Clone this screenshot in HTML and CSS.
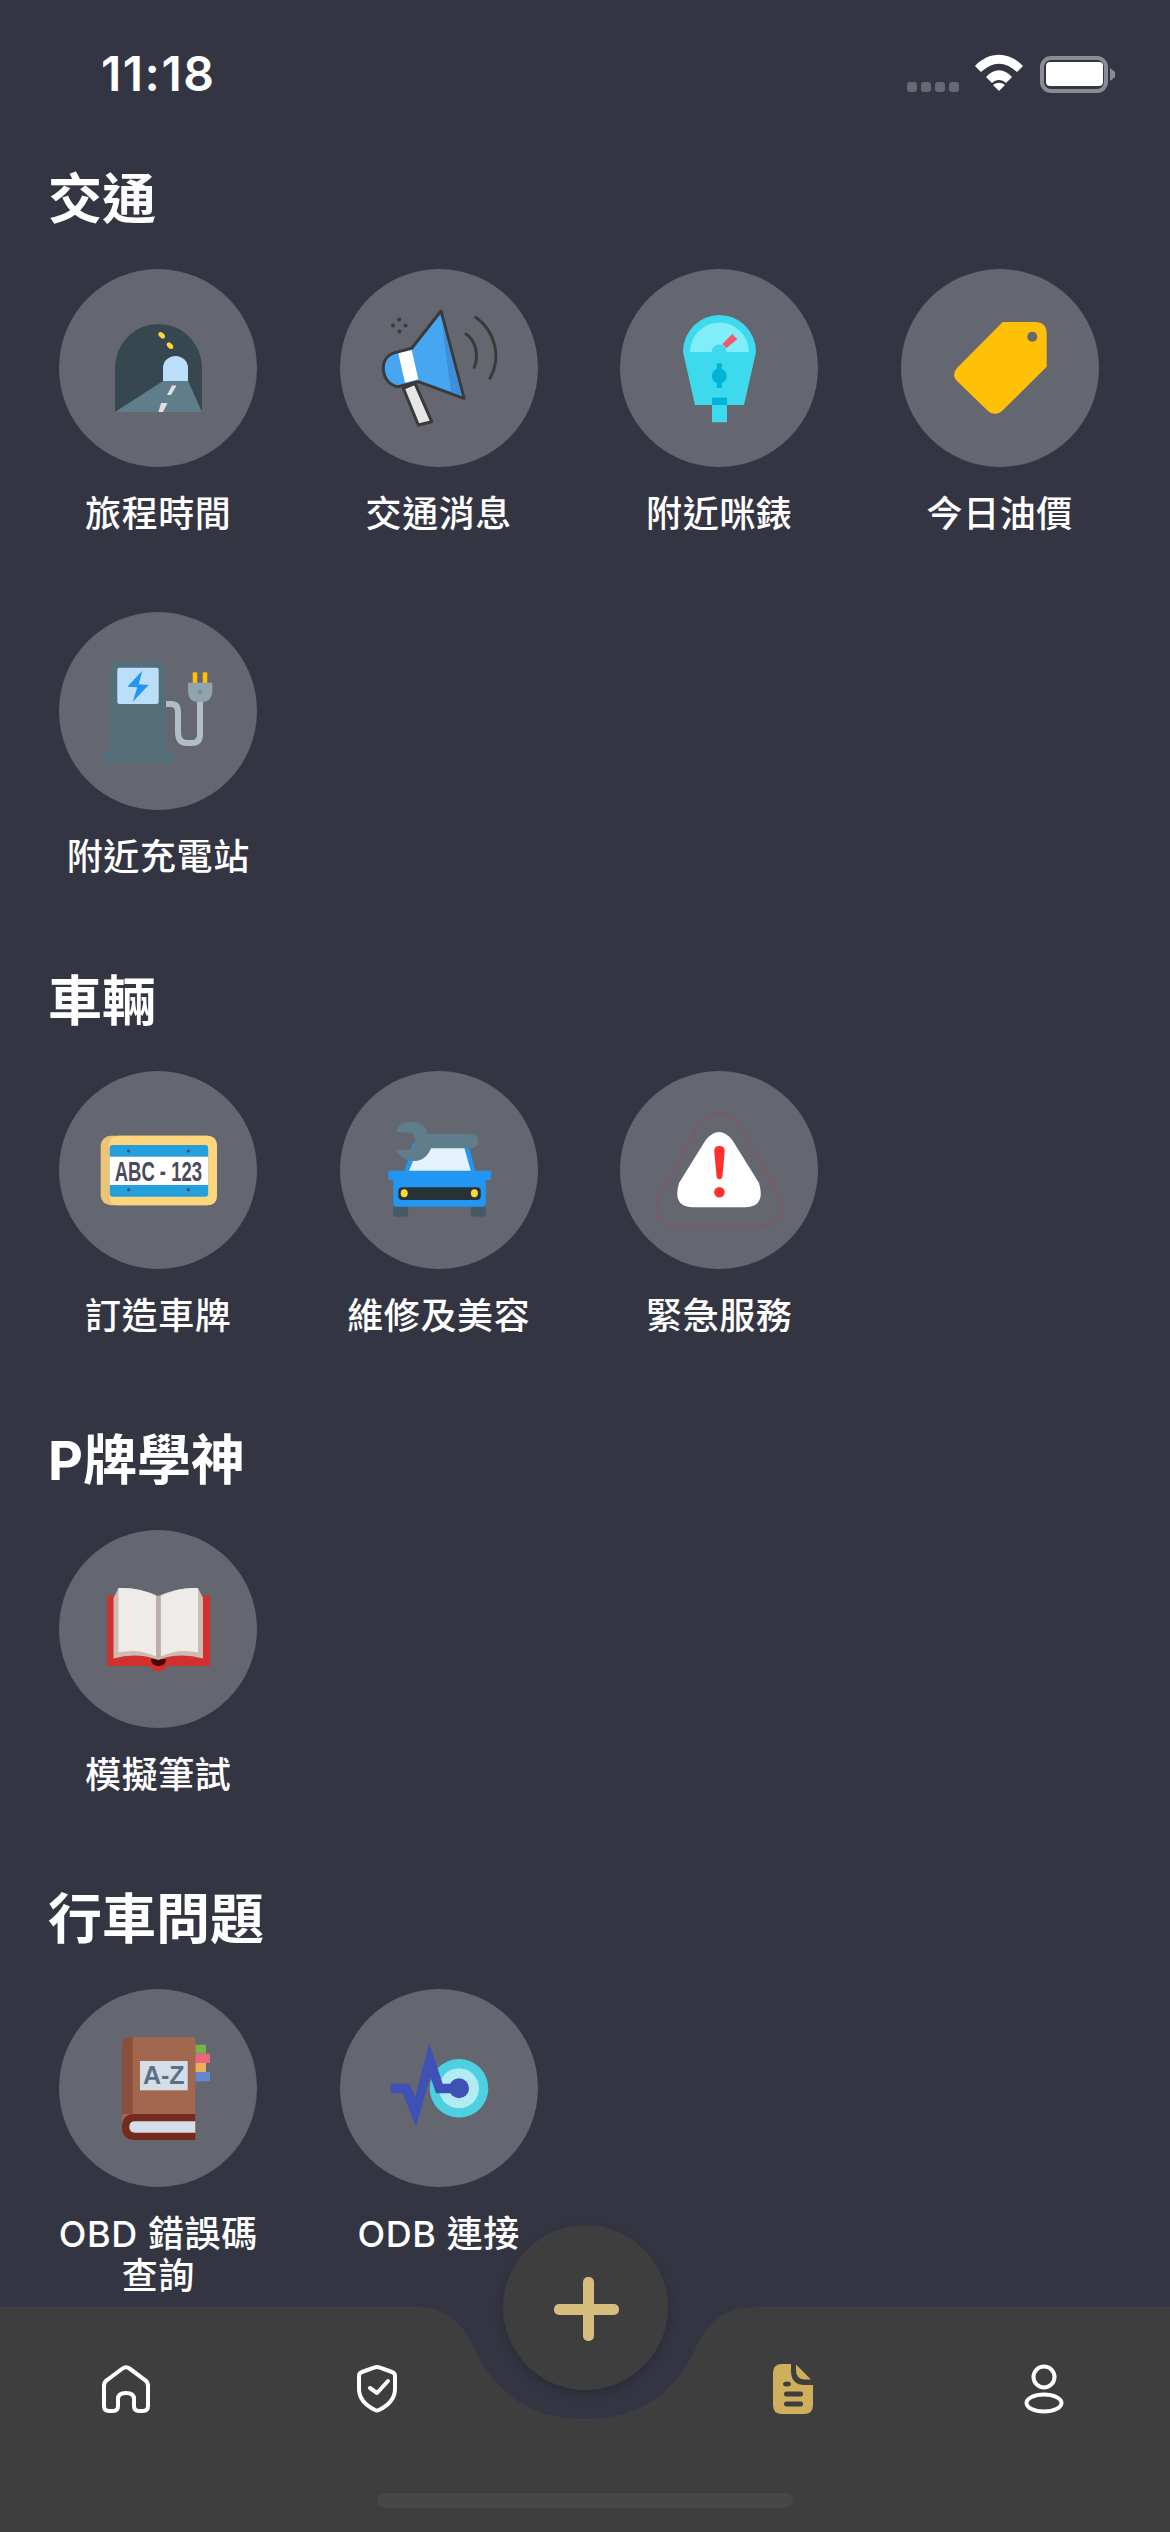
FILE: index.html
```html
<!DOCTYPE html>
<html lang="zh-Hant">
<head>
    <meta charset="utf-8" />
    <title>服務</title>
    <link rel="stylesheet" href="styles.css">
</head>
<body>
<div class="screen">

    <!-- status bar -->
    <div class="status">
        <div class="time">11:18</div>
        <svg class="status-icons" width="208" height="40" viewBox="0 0 208 40">
            <g fill="#666874">
                <rect x="0" y="28" width="10" height="10" rx="3"/>
                <rect x="14" y="28" width="10" height="10" rx="3"/>
                <rect x="28" y="28" width="10" height="10" rx="3"/>
                <rect x="42" y="28" width="10" height="10" rx="3"/>
            </g>
            <g fill="#fff">
                <path d="M68 12C82-3 102-3 116 12L110 18C98 7 86 7 74 18Z"/>
                <path d="M79 23C87 14 97 14 105 23L99 29C95 25 89 25 85 29Z"/>
                <path d="M92 37L86 31C90 28 94 28 98 31Z"/>
            </g>
            <rect x="135" y="4" width="64" height="33" rx="9" fill="none" stroke="#8a8b94" stroke-width="4"/>
            <rect x="139" y="8" width="57" height="24" rx="4" fill="#fff"/>
            <path d="M203 14L208 18V23L203 27Z" fill="#8a8b94"/>
        </svg>
    </div>

    <!-- 交通 -->
    <h2 class="title">交通</h2>
    <div class="grid">
        <div class="item">
            <div class="circle">
                <svg viewBox="0 0 198 198">
                    <path d="M56 143V99A43.500 44 0 0 1 143 99V143Z" fill="#37474f"/>
                    <path d="M104 112V99a12.500 12 0 0 1 25 0V112Z" fill="#bbdefb"/>
                    <path d="M56 143L104 112H129L143 143Z" fill="#607d8b"/>
                    <path d="M113 116.500H117.500L112 126H108Z" fill="#e0e0e0"/>
                    <path d="M102 134H108.500L104 143H99.500Z" fill="#e0e0e0"/>
                    <ellipse cx="102.700" cy="66.300" rx="3.800" ry="2.500" transform="rotate(45 102.700 66.300)" fill="#fdd835"/>
                    <ellipse cx="111" cy="76.700" rx="3.800" ry="2.500" transform="rotate(45 111 76.700)" fill="#fdd835"/>
                </svg>
            </div>
            <div class="label">旅程時間</div>
        </div>
        <div class="item">
            <div class="circle">
                <svg viewBox="0 0 198 198">
                    <path d="M63.300 119.300L75 114.300L91.700 152.700L78.300 156Z" fill="#e6e6e6" stroke="#3a3a3a" stroke-width="3" stroke-linejoin="round"/>
                    <path d="M101 42L124 129.300L78.300 112.700L58 117.700C47 116 43 106 43.300 98C44 89 50 84 58 83L71.700 79.300Z" fill="#46a6f2" stroke="#3a3a3a" stroke-width="3" stroke-linejoin="round"/>
                    <path d="M101 47L122 127L111 123Z" fill="#3f8fd8"/>
                    <path d="M58.300 84.300L71.700 81L78.300 110.300L65 113.700Z" fill="#fff"/>
                    <path d="M126 65C136 72 139 86 134.300 98.300" fill="none" stroke="#3a3a3a" stroke-width="3" stroke-linecap="round"/>
                    <path d="M135.700 48.300C155 62 162 88 150 109.300" fill="none" stroke="#3a3a3a" stroke-width="3" stroke-linecap="round"/>
                    <g fill="#3a3a3a">
                        <circle cx="59.300" cy="50.500" r="2"/>
                        <circle cx="59.300" cy="62.500" r="2"/>
                        <circle cx="53" cy="56.500" r="2"/>
                        <circle cx="65.500" cy="56.500" r="2"/>
                    </g>
                </svg>
            </div>
            <div class="label">交通消息</div>
        </div>
        <div class="item">
            <div class="circle">
                <svg viewBox="0 0 198 198">
                    <path d="M63 83a36.500 37 0 0 1 73 0L124 136H75Z" fill="#3dd9ec"/>
                    <path d="M70 83a29.500 29.500 0 0 1 59 0Z" fill="#80eef8"/>
                    <path d="M102.300 75L112.300 65L117.300 70.300L106.300 79.300Z" fill="#f4586f"/>
                    <circle cx="99" cy="83" r="7.500" fill="#3dd9ec"/>
                    <circle cx="99.300" cy="107" r="7.500" fill="#00b4d8"/>
                    <rect x="96.800" y="94.300" width="5" height="24.700" fill="#00b4d8"/>
                    <rect x="92" y="128.700" width="15" height="24.600" fill="#3dd9ec"/>
                    <rect x="92" y="128.700" width="15" height="7.300" fill="#00b4d8"/>
                </svg>
            </div>
            <div class="label">附近咪錶</div>
        </div>
        <div class="item">
            <div class="circle">
                <svg viewBox="0 0 198 198">
                    <path d="M101.700 53H134Q145.700 53 145.700 65V97.700L101 142Q94 148 87 142L56 112Q50 106 56 99Z" fill="#ffc107"/>
                    <circle cx="131.300" cy="67.700" r="5" fill="#646670"/>
                </svg>
            </div>
            <div class="label">今日油價</div>
        </div>
        <div class="item">
            <div class="circle">
                <svg viewBox="0 0 198 198">
                    <path d="M51 138V58Q51 48.700 60 48.700H97Q106.300 48.700 106.300 58V138Z" fill="#546e7a"/>
                    <rect x="43.300" y="138" width="71" height="12.700" rx="2" fill="#546e7a"/>
                    <rect x="58.300" y="55.700" width="41.400" height="36.300" rx="2" fill="#bbdefb"/>
                    <path d="M83.300 58.700L68.300 74.700L78.300 75.300L73.700 89.700L89.700 73L79.700 72.300Z" fill="#2196f3"/>
                    <path d="M107 92H112Q119 92 119 100V120Q119 131 128 131H133Q141 131 141 122V88" fill="none" stroke="#b0bec5" stroke-width="6"/>
                    <rect x="133.700" y="60.300" width="4.600" height="11" fill="#ffc107"/>
                    <rect x="143.700" y="60.300" width="4.600" height="11" fill="#ffc107"/>
                    <path d="M129 70.700H153.300V78Q153.300 90 143 90H139Q129 90 129 78Z" fill="#90a4ae"/>
                    <circle cx="141" cy="79.700" r="2.500" fill="#78909c"/>
                </svg>
            </div>
            <div class="label">附近充電站</div>
        </div>
    </div>

    <!-- 車輛 -->
    <h2 class="title">車輛</h2>
    <div class="grid">
        <div class="item">
            <div class="circle">
                <svg viewBox="0 0 198 198">
                    <rect x="41.700" y="64.700" width="116.300" height="69.600" rx="10" fill="#ecc478"/>
                    <path d="M60 64.700H148Q158 64.700 158 74.700V124.300Q158 134.300 148 134.300H60Q50 134.300 50 124.300V74.700Q50 64.700 60 64.700Z" fill="#ffd67e"/>
                    <rect x="50.700" y="74" width="98.500" height="51.700" rx="3" fill="#259fdc"/>
                    <rect x="50.700" y="85.700" width="98.500" height="28.300" fill="#fff"/>
                    <g fill="#3f4f66">
                        <circle cx="69.600" cy="80" r="1.600"/>
                        <circle cx="129.300" cy="80" r="1.600"/>
                        <circle cx="69.600" cy="118.700" r="1.600"/>
                        <circle cx="129.300" cy="118.700" r="1.600"/>
                    </g>
                    <text class="plate-text" x="55.700" y="110" textLength="87.300" lengthAdjust="spacingAndGlyphs">ABC - 123</text>
                </svg>
            </div>
            <div class="label">訂造車牌</div>
        </div>
        <div class="item">
            <div class="circle">
                <svg viewBox="0 0 198 198">
                    <path d="M64.200 100L73.200 72.300H128L135.400 100Z" fill="#2196f3"/>
                    <path d="M67.200 104L80.600 72H123L131.900 104Z" fill="#e3f2fd"/>
                    <path d="M70 85L76 72H85Z" fill="#90caf9"/>
                    <rect x="53.300" y="130" width="14.900" height="15.700" rx="3" fill="#455a64"/>
                    <rect x="130.900" y="130" width="14.900" height="15.700" rx="3" fill="#455a64"/>
                    <rect x="48.300" y="99.700" width="103" height="9.300" rx="2" fill="#2196f3"/>
                    <path d="M53.300 107H145.800V133Q145.800 135.700 143 135.700H56Q53.300 135.700 53.300 133Z" fill="#2196f3"/>
                    <rect x="58.300" y="116.300" width="82.500" height="12.700" rx="4" fill="#263238"/>
                    <ellipse cx="64.200" cy="122.300" rx="3.500" ry="4" fill="#fdd835"/>
                    <ellipse cx="134.400" cy="122.300" rx="3.500" ry="4" fill="#fdd835"/>
                    <path d="M56 61C58 54 64 51 71 51C80 51 86 55 88 63H131a7 7 0 0 1 0 14.300H91C88 85 82 90 75 90C66 90 59 86 56 79L72 79Q78 70 72 62Z" fill="#607d8b"/>
                </svg>
            </div>
            <div class="label">維修及美容</div>
        </div>
        <div class="item">
            <div class="circle">
                <svg viewBox="0 0 198 198">
                    <path d="M80.700 50.700Q99 33 118 50.700L160 128Q168 155 140 155H58Q30 155 38 128Z" fill="none" stroke="#7b5a64" stroke-width="2"/>
                    <path d="M85.700 69Q99 53 112.300 69L139 112Q146 136 125 136.300H73Q52 136 59 112Z" fill="#fff"/>
                    <path d="M94.200 80Q94.200 75 99.400 75Q104.700 75 104.700 80L102.500 105Q102 108.300 99.400 108.300Q97 108.300 96.500 105Z" fill="#ff3030"/>
                    <circle cx="99.400" cy="121.300" r="5.300" fill="#ff3030"/>
                </svg>
            </div>
            <div class="label">緊急服務</div>
        </div>
    </div>

    <!-- P牌學神 -->
    <h2 class="title">P牌學神</h2>
    <div class="grid">
        <div class="item">
            <div class="circle">
                <svg viewBox="0 0 198 198">
                    <circle cx="99.300" cy="131.700" r="9.500" fill="#d32f2f"/>
                    <rect x="48.300" y="65.700" width="102.700" height="70.300" fill="#d32f2f"/>
                    <path d="M92 129H107Q107 136 99.500 136Q92 136 92 129Z" fill="#4a0505"/>
                    <path d="M54.500 128.500V68L59.500 58Q80 57 99.300 66Q119 57 139 58L144 68V128.500Q120 122 99.300 130Q78 122 54.500 128.500Z" fill="#cbbcb5"/>
                    <path d="M59.500 58Q80 57 97 66V126.500Q80 118 59.500 122.500Z" fill="#eeebe8"/>
                    <path d="M139 58Q119 57 101.700 66V126.500Q119 118 139 122.500Z" fill="#eeebe8"/>
                    <rect x="97" y="66" width="4.700" height="62" fill="#bcaea8"/>
                </svg>
            </div>
            <div class="label">模擬筆試</div>
        </div>
    </div>

    <!-- 行車問題 -->
    <h2 class="title">行車問題</h2>
    <div class="grid">
        <div class="item">
            <div class="circle">
                <svg viewBox="0 0 198 198">
                    <rect x="136.300" y="55.700" width="10.700" height="9" fill="#78b24a"/>
                    <rect x="136.300" y="64.700" width="14.700" height="9.300" fill="#e8677c"/>
                    <rect x="136.300" y="74" width="10.700" height="9" fill="#f0ad5e"/>
                    <rect x="136.300" y="83" width="14.700" height="9.300" fill="#6488cc"/>
                    <path d="M71 48.300H134Q136.300 48.300 136.300 50.500V151H75Q63 151 63 138V56Q63 48.300 71 48.300Z" fill="#a1684f"/>
                    <path d="M71 48.300H73.700V125H63V56Q63 48.300 71 48.300Z" fill="#8a4f3a"/>
                    <path d="M76 125H136.300V151H76Q63 151 63 138Q63 125 76 125Z" fill="#752a1f"/>
                    <path d="M76 132.300H136.300V143.700H76Q70.300 143.700 70.300 138Q70.300 132.300 76 132.300Z" fill="#d5dde6"/>
                    <rect x="81" y="72" width="47.700" height="29.300" fill="#d5dde6"/>
                    <text class="az-text" x="104.800" y="95">A-Z</text>
                </svg>
            </div>
            <div class="label label-wrap">OBD 錯誤碼查詢</div>
        </div>
        <div class="item">
            <div class="circle">
                <svg viewBox="0 0 198 198">
                    <circle cx="119" cy="99.300" r="29.300" fill="#4dd0e1"/>
                    <circle cx="119" cy="99.300" r="20" fill="#b2ebf2"/>
                    <circle cx="119" cy="99.300" r="10" fill="#3f51b5"/>
                    <path d="M50.700 94.700H69.300L75.300 107.700L89.300 54.300L102.700 94.700H119V104.300H96L90.300 87.700L76 137.700L62.700 104.300H50.700Z" fill="#3f51b5"/>
                </svg>
            </div>
            <div class="label">ODB 連接</div>
        </div>
    </div>

    <!-- bottom tab bar, lies over the page -->
    <div class="tabbar">
        <svg class="tabbar-bg" viewBox="0 0 1170 225">
            <path d="M0 0H415C450 0 465 20 475 43C495 85 530 112 585 112C640 112 675 85 695 43C705 20 720 0 755 0H1170V225H0Z" fill="#3e3e3e"/>
        </svg>
        <div class="tabs">
            <div class="tab-group">
                <svg class="tab" viewBox="0 0 60 60">
                    <path d="M8 27q0-4 3-6L26.500 9.500q3.500-2.500 7 0L49 21q3 2 3 6v20q0 5-5 5h-4q-5 0-5-5v-7q0-6-8-6t-8 6v7q0 5-5 5h-4q-5 0-5-5z" fill="none" stroke="#fff" stroke-width="4"/>
                </svg>
                <svg class="tab" viewBox="0 0 60 60">
                    <path d="M12 17q0-3 3-4L27 8.600q3-1 6 0L45 13q3 1 3 4v13c0 10-8 17-16 21q-2 1-4 0c-8-4-16-11-16-21z" fill="none" stroke="#fff" stroke-width="4"/>
                    <path d="M23 29l7 5l11-12" fill="none" stroke="#fff" stroke-width="4" stroke-linecap="round" stroke-linejoin="round"/>
                </svg>
            </div>
            <div class="tab-group">
                <svg class="tab" viewBox="0 0 60 60">
                    <path d="M19 5H28V12Q28 26 42 26H50V46Q50 55 41 55H19Q10 55 10 46V14Q10 5 19 5Z" fill="#cfae5e"/>
                    <path d="M33 5.500L48 20.500H42Q33 20.500 33 11Z" fill="#cfae5e"/>
                    <ellipse cx="24" cy="25" rx="4" ry="2.500" fill="#3e3e3e"/>
                    <rect x="21" y="32.500" width="19" height="5" rx="2.500" fill="#3e3e3e"/>
                    <rect x="21" y="42.500" width="19" height="5" rx="2.500" fill="#3e3e3e"/>
                </svg>
                <svg class="tab" viewBox="0 0 60 60">
                    <circle cx="30" cy="18" r="10.500" fill="none" stroke="#fff" stroke-width="4"/>
                    <ellipse cx="30" cy="44" rx="17.500" ry="8.500" fill="none" stroke="#fff" stroke-width="4"/>
                </svg>
            </div>
        </div>
        <div class="fab">
            <svg viewBox="0 0 165 165">
                <rect x="80" y="52" width="11" height="64" rx="5" fill="#d6bc7d"/>
                <rect x="51" y="79" width="65" height="11" rx="5" fill="#d6bc7d"/>
            </svg>
        </div>
        <div class="home-bar"></div>
    </div>
</div>
</body>
</html>
```

FILE: styles.css
```css
* {
    box-sizing: border-box;
}

body {
    margin: 0;
    background: #343542;
    color: #fff;
    font-family: Inter, "Noto Sans CJK TC", sans-serif;
}

.screen {
    position: relative;
    height: 2532px;
    overflow: hidden;
}

.status {
    display: flex;
    justify-content: space-between;
    align-items: flex-start;
    height: 153px;
    padding: 50px 55px 0 101px;
}

.time {
    font-size: 48px;
    line-height: 48px;
    font-weight: 600;
    letter-spacing: 1.5px;
}

.status-icons {
    display: block;
    margin-top: 4px;
}

.title {
    margin: 11px 0 33px;
    padding-left: 48px;
    font-size: 54px;
    line-height: 72px;
    font-weight: 700;
}

.grid {
    display: grid;
    grid-template-columns: repeat(4, 280.5px);
    padding-left: 18px;
}

.item {
    display: flex;
    flex-direction: column;
    align-items: center;
    height: 343px;
}

.circle {
    width: 198px;
    height: 198px;
    flex: none;
    border-radius: 50%;
    background: #646670;
}

.circle svg {
    display: block;
    width: 198px;
    height: 198px;
}

.label {
    margin-top: 26px;
    font-size: 36px;
    line-height: 42px;
    font-weight: 500;
    letter-spacing: 0.6px;
    text-align: center;
}

.label-wrap {
    width: 220px;
}

.plate-text {
    font-family: "Liberation Sans", sans-serif;
    font-size: 28px;
    font-weight: 700;
    fill: #4a4a5c;
}

.az-text {
    font-family: "Liberation Sans", sans-serif;
    font-size: 25px;
    font-weight: 700;
    fill: #5a7088;
    text-anchor: middle;
}

.tabbar {
    position: absolute;
    left: 0;
    right: 0;
    bottom: 0;
    height: 225px;
}

.tabbar-bg {
    position: absolute;
    left: 0;
    top: 0;
    width: 1170px;
    height: 225px;
}

.tabs {
    position: relative;
    display: flex;
    justify-content: space-between;
    padding: 52px 96px 0;
}

.tab-group {
    display: flex;
    justify-content: space-between;
    width: 311px;
}

.tab {
    display: block;
    width: 60px;
    height: 60px;
}

.fab {
    position: absolute;
    left: 503px;
    top: -82px;
    width: 165px;
    height: 165px;
    border-radius: 50%;
    background: #3e3e3e;
    box-shadow: 0 4px 10px rgba(30, 30, 40, 0.35);
}

.fab svg {
    display: block;
}

.home-bar {
    position: absolute;
    left: 377px;
    top: 186px;
    width: 416px;
    height: 15px;
    border-radius: 8px;
    background: #474747;
}
```
